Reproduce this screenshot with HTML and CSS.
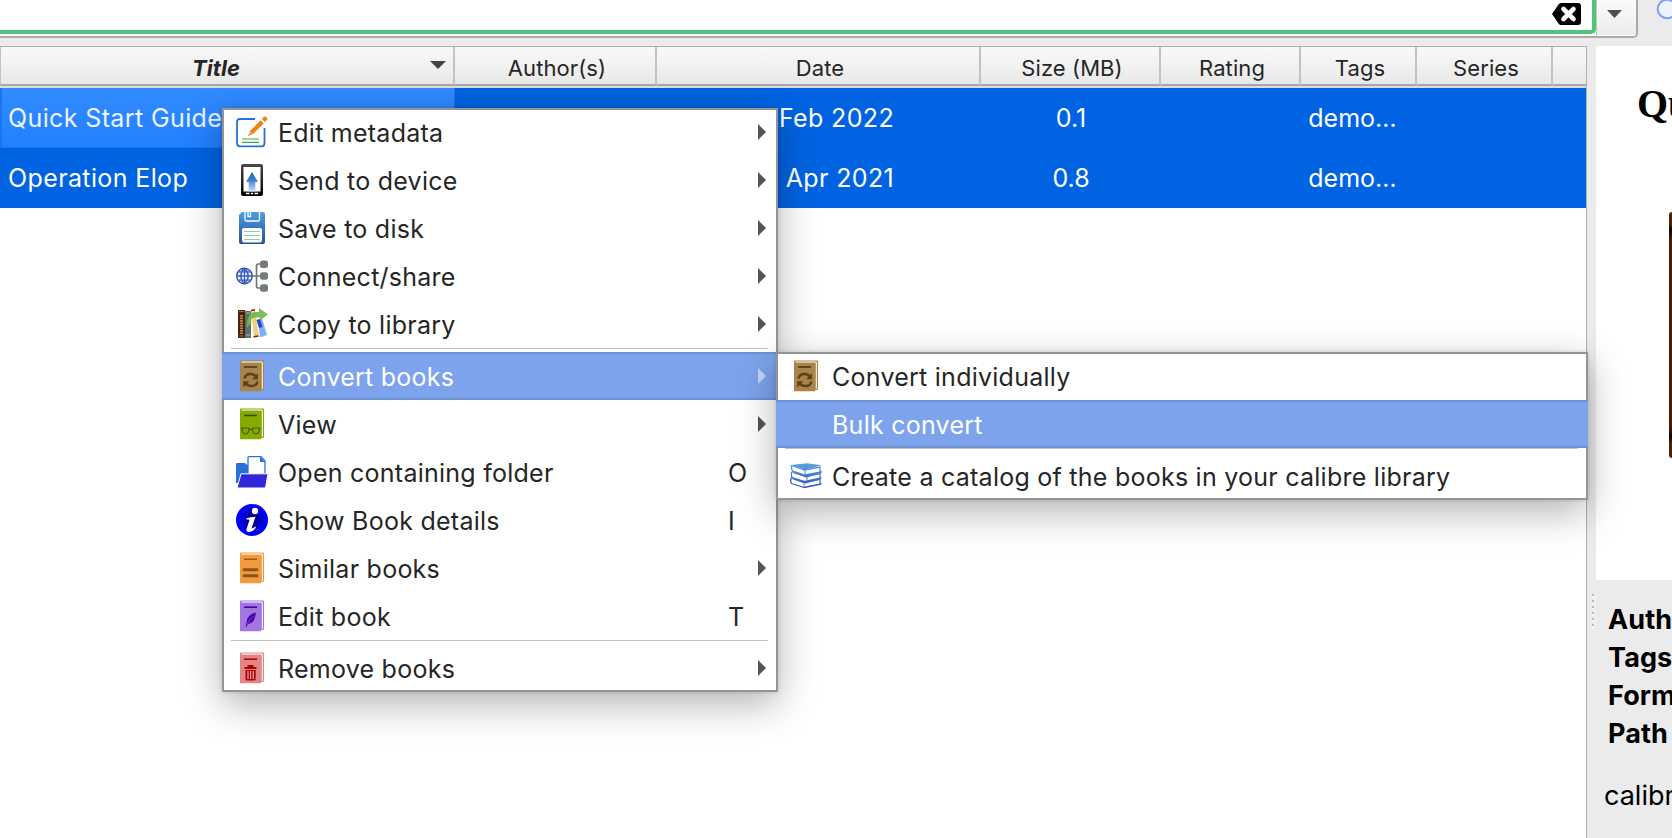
FILE: index.html
```
<!DOCTYPE html>
<html lang="en">
<head>
<meta charset="utf-8">
<title>calibre library</title>
<link rel="stylesheet" href="styles.css">
</head>
<body>
<svg class="defs" width="0" height="0">
  <defs>
    <linearGradient id="gUp" x1="0" y1="0" x2="0" y2="1"><stop offset="0" stop-color="#1f5cc4"/><stop offset=".45" stop-color="#4682d8"/><stop offset="1" stop-color="#d3e1f7"/></linearGradient>
    <linearGradient id="gPhone" x1="0" y1="0" x2="0" y2="1"><stop offset="0" stop-color="#4a4a4a"/><stop offset="1" stop-color="#000"/></linearGradient>
    <linearGradient id="gDisk" x1="0" y1="0" x2="0" y2="1"><stop offset="0" stop-color="#4b9fe0"/><stop offset="1" stop-color="#234f9f"/></linearGradient>
    <linearGradient id="gStack" gradientUnits="userSpaceOnUse" x1="0" y1="3" x2="0" y2="28"><stop offset="0" stop-color="#5fa3e0"/><stop offset="1" stop-color="#2f4fc4"/></linearGradient>
    <radialGradient id="gInfo"><stop offset="0" stop-color="#000070"/><stop offset=".8" stop-color="#0000f0"/><stop offset="1" stop-color="#0000ff"/></radialGradient>
    <symbol id="book" viewBox="0 0 32 32">
      <path fill="currentColor" d="M4 1.500Q4 .5 5 .5H27Q28 .5 28 1.500V29Q28 30 27 30H25V31.300H4Z"/>
      <path fill="none" stroke="#fff" stroke-width="1" d="M5.500 2H26.300V29"/>
    </symbol>
    <symbol id="convert" viewBox="0 0 32 32">
      <use href="#book" color="#a98349"/>
      <path d="M8 7H21" stroke="#4c3813" stroke-width="1.600"/>
      <path d="M8.500 18.500Q9.500 14 14.500 14Q18 14 20 16.500" fill="none" stroke="#5a431b" stroke-width="2.500"/>
      <path d="M22 13.200V19.200H16Z" fill="#5a431b"/>
      <path d="M21.500 21.500Q20.500 26 15.500 26Q12 26 10 24" fill="none" stroke="#5a431b" stroke-width="2.500"/>
      <path d="M7.200 27.500V21.300H13.500Z" fill="#5a431b"/>
    </symbol>
  </defs>
</svg>

<div class="app">
  <header class="toolbar">
    <div class="search">
      <div class="search-field">
        <svg class="clear" viewBox="0 0 29 22"><path d="M9 0H26Q29 0 29 3V19Q29 22 26 22H9Q7.500 22 6.500 20.500L0 11L6.500 1.500Q7.500 0 9 0Z"/><path d="M11.500 6L21.500 16M21.500 6L11.500 16" stroke="#fff" stroke-width="4.600" stroke-linecap="round"/></svg>
      </div>
      <div class="search-drop"><i class="down"></i></div>
    </div>
    <svg class="lens" viewBox="0 0 22 22"><circle cx="11" cy="11" r="9.300" fill="#eef3fb" stroke="#77a3ec" stroke-width="2"/></svg>
  </header>

  <main class="body">
    <section class="table">
      <div class="row head">
        <div class="sorted">Title<i class="down sort"></i></div><div>Author(s)</div><div>Date</div><div>Size (MB)</div><div>Rating</div><div>Tags</div><div>Series</div><div></div>
      </div>
      <div class="row data">
        <div class="title current">Quick Start Guide</div><div>John Schember</div><div class="date">Feb 2022</div><div>0.1</div><div></div><div class="tags">demo…</div><div></div><div></div>
      </div>
      <div class="row data">
        <div class="title">Operation Elop</div><div></div><div class="date">Apr 2021</div><div>0.8</div><div></div><div class="tags">demo…</div><div></div><div></div>
      </div>
    </section>
    <div class="splitter"><i class="grip"></i></div>
    <aside class="details">
      <div class="preview">
        <h1>Quick Start Guide</h1>
        <div class="cover"></div>
      </div>
      <div class="meta">
        <b>Authors</b><b>Tags</b><b>Formats</b><b>Path</b>
        <p>calibre</p>
      </div>
    </aside>
  </main>

  <nav class="menu main-menu">
    <div class="item"><svg class="icon" viewBox="0 0 32 32"><path fill="none" stroke="#2672d9" stroke-width="1.800" d="M19 3H3.500Q1 3 1 6V27Q1 30.300 4 30.300H26Q28.500 30.300 28.500 27V12"/><path stroke="#37a84b" stroke-width="1.200" d="M6 23H23M6 26.400H23"/><path fill="#ee8311" d="M24.600 4.300L27.700 7.400L17 18L12 20L14 15ZM25.900 3L28 .8Q29.200 0 30.500 1.200Q32 2.700 31 4L29 6.100Z"/><path d="M13 18L14.500 16.600L15.600 17.600" stroke="#fff" stroke-width=".8" fill="none"/></svg><span>Edit metadata</span><i class="right"></i></div>
    <div class="item"><svg class="icon" viewBox="0 0 32 32"><rect x="5" y="0" width="22" height="32" rx="2" fill="url(#gPhone)"/><rect x="7.500" y="3" width="17" height="24.500" fill="#fff"/><path fill="url(#gUp)" d="M16 8L22 18H19.300V27.500H12.700V18H10Z"/><path stroke="#fff" stroke-width="1.300" d="M10 29.500H13.500M15 29.500H17M18.500 29.500H22"/></svg><span>Send to device</span><i class="right"></i></div>
    <div class="item"><svg class="icon" viewBox="0 0 32 32"><path fill="url(#gDisk)" d="M6 0H27Q29 0 29 2V30Q29 32 27 32H5Q3 32 3 30V3Z"/><path fill="none" stroke="#fff" stroke-width="1.300" d="M9 0V7.500Q9 9 10.500 9H22Q23.500 9 23.500 7.500V0M14.500 0V4.500H12V0"/><rect x="6" y="16" width="20" height="14.500" rx="2" fill="#fff"/><path stroke="#94cf9c" stroke-width="1.100" d="M8 19.500H24M8 23.500H24M8 27.500H24"/></svg><span>Save to disk</span><i class="right"></i></div>
    <div class="item"><svg class="icon" viewBox="0 0 32 32"><circle cx="8.500" cy="16" r="7.800" fill="#e8eefc" stroke="#3150b0" stroke-width="1.400"/><path fill="none" stroke="#3b5dba" stroke-width="1.300" d="M1 16H16M2 11.800H15M2 20.200H15M8.500 8V24M8.500 8Q1 16 8.500 24M8.500 8Q16 16 8.500 24"/><path fill="none" stroke="#69736f" stroke-width="1.600" d="M16 16H25M25 4H22Q20.500 4 20.500 6V26Q20.500 28 22 28H25"/><g fill="#747b79"><rect x="24" y=".5" width="8" height="7.500" rx="2.500"/><rect x="24" y="12.300" width="8" height="7.500" rx="2.500"/><rect x="24" y="24.200" width="8" height="7.500" rx="2.500"/></g></svg><span>Connect/share</span><i class="right"></i></div>
    <div class="item"><svg class="icon" viewBox="0 0 32 32"><path fill="#4d210b" d="M2 2H9V30H2Z"/><path d="M3 3.500H8M3 28H8" stroke="#a76b2c"/><path d="M5.500 7V26" stroke="#c09148" stroke-width="2.600" stroke-dasharray="1.700 .8"/><path fill="#557270" d="M9 3H15V30H9Z"/><path d="M10 5H14M10 27H14" stroke="#a8bbb5"/><path fill="#efcf80" d="M15 2L19 1.500L23 28.500L18 30Z"/><path d="M15 2.500L19 1.800M17.500 28.800L22.500 28" stroke="#762c20" stroke-width="1.500"/><path fill="#80b1f7" d="M22 12L26 10L31 27L24 29.500Z"/><path fill="#2349c6" d="M20.500 12L24 11L26.500 19L23 20Z"/><path fill="#72b84b" fill-opacity=".92" d="M11 20Q10 4.500 20 4H23V0L32 6.500L24 12.500V9.500H20Q14 9.500 15.500 14Z"/></svg><span>Copy to library</span><i class="right"></i></div>
    <hr>
    <div class="item active"><svg class="icon"><use href="#convert"/></svg><span>Convert books</span><i class="right"></i></div>
    <div class="item"><svg class="icon" viewBox="0 0 32 32"><use href="#book" color="#86aa02"/><path d="M8 7.500H21" stroke="#2d5200" stroke-width="1.600"/><path d="M5 20H12.500L14 21.500H15.500L17 20H24.500M6 20.500Q6 26 10 26Q13 25 13 21M16.500 21Q17 26 20 26Q23.500 25 23.500 20.500" fill="none" stroke="#3c6300" stroke-width="1.200"/></svg><span>View</span><i class="right"></i></div>
    <div class="item"><svg class="icon" viewBox="0 0 32 32"><path fill="#2473d9" d="M0 8Q0 7 1 7H9L11 9H13V27H0Z"/><path fill="#fff" stroke="#2473d9" stroke-width="1.300" d="M12 21V2Q12 .7 13 .7H25L29 5V18Z"/><path fill="#2473d9" d="M24 .7L29 6H24Z"/><path fill="#3427d9" stroke="#fff" d="M5 17.800H32L29.500 32H1Z"/></svg><span>Open containing folder</span><kbd>O</kbd></div>
    <div class="item"><svg class="icon" viewBox="0 0 32 32"><circle cx="16" cy="16" r="16" fill="url(#gInfo)"/><circle cx="19" cy="7" r="3.200" fill="#fff"/><path fill="#fff" d="M10.500 14.300Q15 13 19.500 12.700L15.500 24.500Q18 24 19.300 22.500L20 23.200Q17.500 27.700 13 27.900Q9.800 28 10.500 25L13.500 16Q13.500 15 10.500 15.600Z"/></svg><span>Show Book details</span><kbd>I</kbd></div>
    <div class="item"><svg class="icon" viewBox="0 0 32 32"><use href="#book" color="#f39a3c"/><path d="M8 7.200H21" stroke="#88531c" stroke-width="1.300"/><path d="M8 17.800H21M8 23.800H21" stroke="#88531c" stroke-width="3" stroke-linecap="round"/></svg><span>Similar books</span><i class="right"></i></div>
    <div class="item"><svg class="icon" viewBox="0 0 32 32"><use href="#book" color="#a176df"/><path d="M8 7.200H21" stroke="#4b00aa" stroke-width="1.600"/><path fill="#4b00aa" d="M20 12.500Q10 15 10.500 23L9.500 27L10.700 26.500L11.700 24Q18 23 19 17Z"/><path d="M11 24Q14 19 17.500 16" stroke="#a176df" stroke-width=".6" fill="none"/></svg><span>Edit book</span><kbd>T</kbd></div>
    <hr>
    <div class="item"><svg class="icon" viewBox="0 0 32 32"><use href="#book" color="#e08686"/><path d="M8 7.200H21" stroke="#b60008" stroke-width="1.600"/><path d="M8.500 16H20.500M12.500 15V14H16.500V15" stroke="#b60008" stroke-width="2" fill="none"/><path fill="#b60008" d="M9.500 18H19.700V27Q19.700 28.500 18 28.500H11Q9.500 28.500 9.500 27Z"/><path d="M12 19V27M14.600 19V27M17.200 19V27" stroke="#efb5b5" stroke-width="1.100"/></svg><span>Remove books</span><i class="right"></i></div>
  </nav>

  <nav class="menu sub-menu">
    <div class="item"><svg class="icon"><use href="#convert"/></svg><span>Convert individually</span></div>
    <div class="item active"><svg class="icon"></svg><span>Bulk convert</span></div>
    <hr>
    <div class="item"><svg class="icon" viewBox="0 0 32 32"><g fill="#fff" stroke="url(#gStack)" stroke-width="1.300" stroke-linejoin="round"><path d="M2 17.500Q-.5 20 1.500 23.500L14 27.500L31 24L30 23.300V19L14 22.500Z"/><path d="M2.500 11.500Q.5 13.500 2 17.500L15 21.500L31 18L30 17.300V13.500L15 16.500Z"/><path d="M1.500 5.500Q1 8 2.500 11L15 15L31.500 12L30 11V7L14 10Z"/></g><path fill="url(#gStack)" d="M1 5L17 3.300L32 5.300L14.500 9.500ZM3 11.500L15 15L30 12.200V13.300L17 17.500L4 13.500ZM2 17.800L15 21.500L30 18.500V19.700L15 23.500L3 19.500Z"/><path d="M15 10V14.500M17 17V20.500M14 23.500V27" stroke="#4478d0" stroke-width=".9"/></svg><span>Create a catalog of the books in your calibre library</span></div>
  </nav>
</div>
</body>
</html>
```
FILE: styles.css
```
* { box-sizing: border-box; }
body { margin: 0; background: #ebebeb; font-family: Inter, "Liberation Sans", sans-serif; color: #262626; }
.defs { display: block; position: absolute; }
.app { position: relative; width: 1672px; height: 838px; overflow: hidden; display: flex; flex-direction: column; }
.toolbar { height: 46px; display: flex; align-items: flex-start; gap: 18px; }
.search { flex: none; width: 1638px; height: 38px; display: flex; background: #fff; border: solid #a9a9a9; border-width: 0 2px 2px 0; border-radius: 0 0 5px 0; }
.search-field { flex: none; width: 1596px; height: 34px; border: solid #4fc779; border-width: 0 4px 4px 0; border-radius: 0 0 5px 0; display: flex; justify-content: flex-end; padding: 3px 11px 0 0; }
.clear { width: 29px; height: 22px; }
.search-drop { flex: 1; height: 35px; border-left: 1px solid #c4c4c4; background: linear-gradient(#fafafa, #ececec); display: flex; justify-content: center; padding: 10px 4px 0 0; }
.down { width: 15px; height: 8px; background: #505050; clip-path: polygon(0 0, 100% 0, 50% 100%); }
.lens { width: 22px; height: 22px; margin-top: -2px; flex: none; }

.body { flex: 1; display: flex; min-height: 0; }
.table { width: 1587px; background: #fff; border: solid #b0b0b0; border-width: 1px 1px 0 0; }
.row { display: grid; grid-template-columns: 455px 202px 324px 180px 140px 116px 136px 33px; }
.row > div { display: flex; align-items: center; justify-content: center; white-space: nowrap; }
.head { height: 41px; font-size: 22px; letter-spacing: .1px; background: linear-gradient(#f8f8f8, #f0f0f0 55%, #e7e7e7); border-bottom: 2px solid #dcdcdc; }
.head > div { border-right: 2px solid #c2c2c2; border-bottom: 2px solid #a8a8a8; padding: 5px 0 0 4px; }
.head > div:last-child { border-right: 0; }
.head .sorted { font-weight: 700; font-style: italic; border-left: 1px solid #c2c2c2; position: relative; padding-left: 0; padding-right: 22px; }
.sort { position: absolute; right: 7px; top: 14px; width: 16px; background: #444; }
.data { height: 60px; background: #0063e1; color: #fff; font-size: 25px; }
.data > .title { justify-content: flex-start; padding-left: 8px; letter-spacing: .38px; }
.data > .current { background: linear-gradient(#328bff, #2280ff); border: solid #1c75f0; border-width: 0 1px 1px 2px; padding-left: 6px; color: #eef4ff; }
.data > .date { justify-content: flex-end; padding-right: 87px; letter-spacing: .35px; }
.data > .tags { padding-right: 13px; }

.splitter { width: 9px; display: flex; align-items: center; justify-content: flex-end; padding-top: 338px; }
.grip { width: 4px; height: 34px; background: repeating-linear-gradient(#b8b8b8 0 2px, #f6f6f6 2px 4px, #ebebeb 4px 6px); border-right: 2px solid #f0f0f0; }
.details { flex: 1; min-width: 0; display: flex; flex-direction: column; color: #000; }
.preview { height: 534px; background: #fff; overflow: hidden; display: flex; flex-direction: column; align-items: flex-end; }
.preview h1 { margin: 35px 0 0; width: 35px; font: 700 40px/46px "Liberation Serif", serif; white-space: nowrap; }
.cover { width: 3px; height: 246px; margin-top: 85px; border-radius: 4px 0 0 4px; background: linear-gradient(#4f2108 0 12px, #120500 18px, #4a1b02 28px 215px, #120500 224px, #4f2108 232px); }
.meta { padding: 21px 0 0 12px; font-size: 27px; display: flex; flex-direction: column; white-space: nowrap; }
.meta b { line-height: 38px; letter-spacing: .1px; }
.meta p { margin: 24px 0 0 -4px; line-height: 38px; }

.menu { position: absolute; background: #fff; box-shadow: inset 0 0 0 2px #959595, 0 12px 36px rgba(0,0,0,.3), 0 0 4px rgba(0,0,0,.15); font-size: 25px; letter-spacing: .25px; }
.main-menu { left: 222px; top: 108px; width: 556px; }
.sub-menu { left: 776px; top: 352px; width: 812px; }
.item { height: 48px; display: flex; align-items: center; padding: 0 12px 0 14px; white-space: nowrap; }
.item span { flex: 1; padding: 1px 0 0 10px; }
.icon { width: 32px; height: 32px; flex: none; }
.active { background: #7ca3ec; color: #fff; border: solid #6d92d3; border-width: 2px 0; }
.right { width: 8px; height: 16px; background: #555; clip-path: polygon(0 0, 100% 50%, 0 100%); }
.active .right { background: #c3d5f7; }
.menu kbd { font: inherit; width: 38px; padding-top: 1px; }
.menu hr { margin: 0 10px 0 9px; border: 0; height: 4px; background: linear-gradient(#c0c0c0 1px, transparent 1px); }
```
